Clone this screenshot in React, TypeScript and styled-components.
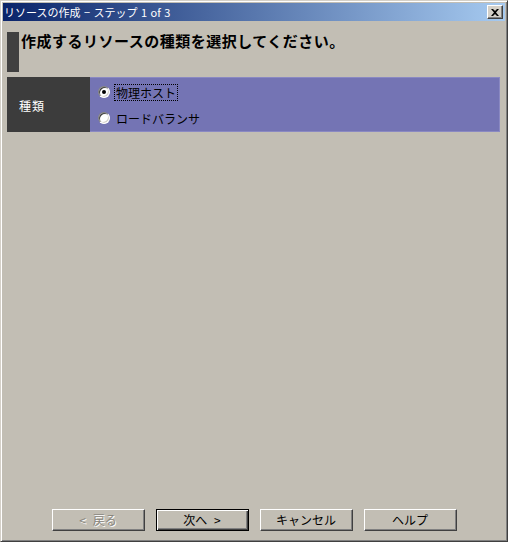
import React from "react";
import styled, { createGlobalStyle } from "styled-components";

const FACE = "#c2beb4";
const JP = `"Noto Sans CJK JP", "Noto Sans", sans-serif`;

const Global = createGlobalStyle`
  html, body { margin: 0; padding: 0; background: ${FACE}; }
  * { box-sizing: border-box; }
`;

const Window = styled.div`
  width: 508px;
  height: 542px;
  display: flex;
  flex-direction: column;
  background: ${FACE};
  border: 1px solid;
  border-color: #d4d0c8 #404040 #404040 #d4d0c8;
  box-shadow: inset 1px 1px #ffffff, inset -1px -1px #808080;
  padding: 2px;
  font-family: ${JP};
`;

const TitleBar = styled.div`
  height: 18px;
  display: flex;
  align-items: center;
  justify-content: space-between;
  padding: 0 2px 0 1px;
  background: linear-gradient(to right, #0a246a, #a6caf0);
`;

const TitleText = styled.span`
  color: #ffffff;
  font-size: 11px;
  line-height: 18px;
  word-spacing: 1px;
  white-space: nowrap;
`;

const CloseButton = styled.button`
  width: 16px;
  height: 14px;
  padding: 0;
  display: flex;
  align-items: center;
  justify-content: center;
  background: #d4d0c8;
  border: 1px solid;
  border-color: #ffffff #404040 #404040 #ffffff;
  box-shadow: inset -1px -1px #808080;
`;

const Content = styled.div`
  flex: 1;
  display: flex;
  flex-direction: column;
  padding: 11px 5px 0 4px;
`;

const Heading = styled.div`
  display: flex;
  align-items: flex-start;
  gap: 2px;
`;

const HeadingMark = styled.div`
  width: 12px;
  height: 40px;
  background: #404040;
`;

const HeadingText = styled.h1`
  margin: 0;
  font-size: 15px;
  font-weight: bold;
  line-height: 17px;
  color: #000000;
  white-space: nowrap;
  letter-spacing: 0.5px;
`;

const FormTable = styled.div`
  margin-top: 5px;
  height: 55px;
  display: grid;
  grid-template-columns: 83px 1fr;
`;

const LabelCell = styled.div`
  background: #3c3c3c;
  color: #ffffff;
  font-size: 12px;
  letter-spacing: 1px;
  display: flex;
  align-items: center;
  padding: 2px 0 0 12px;
`;

const ValueCell = styled.div`
  background: #7474b4;
  border: 1px solid #8a89c2;
  border-left: none;
  display: flex;
  flex-direction: column;
  padding: 1px 0 0 8px;
`;

const RadioRow = styled.label`
  height: 26px;
  display: flex;
  align-items: center;
  gap: 4px;
  font-size: 12px;
  color: #000000;
`;

const RadioCircle = styled.span<{ $checked?: boolean }>`
  position: relative;
  width: 12px;
  height: 12px;
  border-radius: 50%;
  background: #ffffff;
  border: 1px solid;
  border-color: #808080 #ffffff #ffffff #808080;
  box-shadow: inset 1px 1px #404040, inset -1px -1px #d4d0c8;
  &::after {
    content: "";
    display: ${(p) => (p.$checked ? "block" : "none")};
    position: absolute;
    left: 3px;
    top: 3px;
    width: 4px;
    height: 4px;
    border-radius: 50%;
    background: #000000;
  }
`;

const RadioLabel = styled.span<{ $focused?: boolean }>`
  line-height: 15px;
  padding: 0 1px;
  border: 1px dotted ${(p) => (p.$focused ? "#000000" : "transparent")};
  white-space: nowrap;
`;

const Footer = styled.div`
  display: flex;
  justify-content: center;
  gap: 11px;
  padding: 0 0 8px 0;
`;

const Button = styled.button<{ $default?: boolean }>`
  width: 93px;
  height: 22px;
  padding: 0;
  font-family: ${JP};
  font-size: 12px;
  line-height: 1;
  word-spacing: 4px;
  color: #000000;
  background: ${FACE};
  border: 1px solid;
  border-color: ${(p) =>
    p.$default ? "#000000" : "#ffffff #404040 #404040 #ffffff"};
  box-shadow: ${(p) =>
    p.$default
      ? "inset 1px 1px #ffffff, inset -1px -1px #404040, inset -2px -2px #808080"
      : "inset -1px -1px #808080"};
  &:disabled {
    color: #8a877e;
    text-shadow: 1px 1px #ffffff;
  }
`;

export default function App() {
  return (
    <>
      <Global />
      <Window>
        <TitleBar>
          <TitleText>リソースの作成 − ステップ 1 of 3</TitleText>
          <CloseButton aria-label="閉じる">
            <svg width="8" height="7" viewBox="0 0 8 7">
              <path d="M0 0h2l2 2 2-2h2L5 3.5 8 7H6L4 5 2 7H0l3-3.5z" fill="#000" />
            </svg>
          </CloseButton>
        </TitleBar>
        <Content>
          <Heading>
            <HeadingMark />
            <HeadingText>作成するリソースの種類を選択してください。</HeadingText>
          </Heading>
          <FormTable>
            <LabelCell>種類</LabelCell>
            <ValueCell>
              <RadioRow>
                <RadioCircle $checked />
                <RadioLabel $focused>物理ホスト</RadioLabel>
              </RadioRow>
              <RadioRow>
                <RadioCircle />
                <RadioLabel>ロードバランサ</RadioLabel>
              </RadioRow>
            </ValueCell>
          </FormTable>
        </Content>
        <Footer>
          <Button disabled>&lt; 戻る</Button>
          <Button $default>次へ &gt;</Button>
          <Button>キャンセル</Button>
          <Button>ヘルプ</Button>
        </Footer>
      </Window>
    </>
  );
}
